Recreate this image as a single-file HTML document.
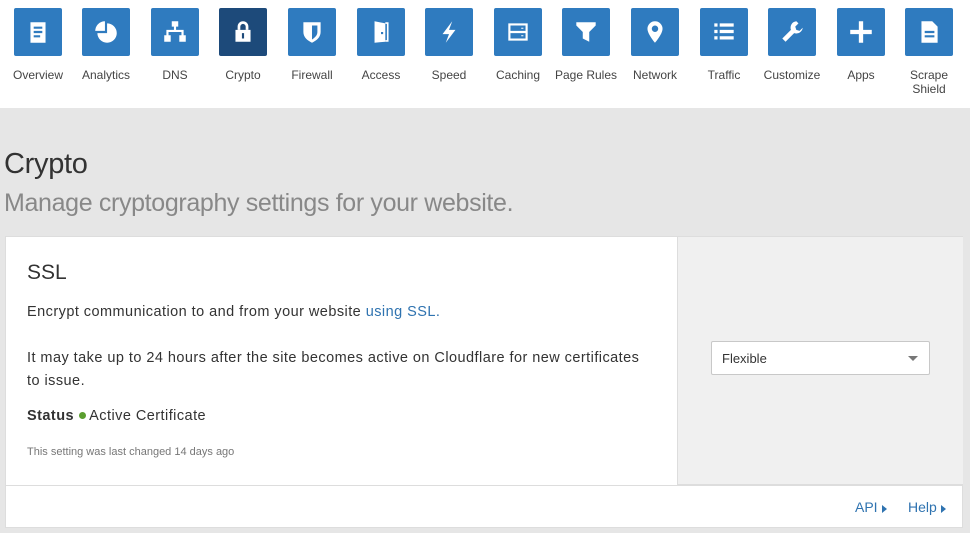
<!DOCTYPE html>
<html><head><style>
*{margin:0;padding:0;box-sizing:border-box}
body{width:970px;height:533px;background:#e6e6e6;font-family:"Liberation Sans",sans-serif;position:relative;overflow:hidden;color:#333}
#top{position:absolute;left:0;top:0;width:970px;height:108px;background:#fff}
.it{position:absolute;top:8px;width:68px;text-align:center;font-size:12px;color:#444;line-height:14px}
.ic{width:48px;height:48px;background:#2f7bbf;margin:0 auto 12px;border-radius:2px;display:flex;align-items:center;justify-content:center}
.ic.on{background:#1d4a7a}
.ic svg{width:28px;height:28px;fill:#fff}
h1{position:absolute;left:4px;top:148px;font-weight:normal;font-size:29px;color:#333;letter-spacing:-0.3px}
h2{position:absolute;left:4px;top:189px;font-weight:normal;font-size:25px;color:#888;letter-spacing:-0.35px}
#card{position:absolute;left:5px;top:236px;width:958px;height:292px;background:#fff;border:1px solid #ddd}
#right{position:absolute;left:671px;top:0;width:286px;height:248px;background:#f0f0f0;border-left:1px solid #ddd;border-bottom:1px solid #ddd}
#foot{position:absolute;left:0;top:248px;width:956px;height:1px;background:#ddd}
.t{position:absolute;left:21px;font-size:14.5px;color:#333;letter-spacing:0.45px;white-space:nowrap}
a{color:#2f73b0;text-decoration:none}
#sel{position:absolute;left:33px;top:104px;width:219px;height:34px;background:#fff;border:1px solid #c8c8c8;border-radius:2px;font-size:13px;padding:9px 10px;color:#333}
#sel:after{content:"";position:absolute;right:11px;top:14px;border:5px solid transparent;border-top:5px solid #777;border-bottom:0}
.lk{position:absolute;top:262px;font-size:14px;color:#2f73b0}
.tri{display:inline-block;border:4px solid transparent;border-left:5px solid #2f73b0;border-right:0;margin-left:4px;vertical-align:-1px}
</style></head><body>
<div id="top"></div>
<div class="it" style="left:4px"><div class="ic"><svg viewBox="0 0 26 26"><path d="M6 4h14v19H6z M9 8v2h8V8z M9 12v2h8v-2z M9 16v2h6v-2z" fill-rule="evenodd"/></svg></div>Overview</div>
<div class="it" style="left:72px"><div class="ic"><svg viewBox="0 0 26 26"><path d="M14 5a9 9 0 1 1-9 9h9z"/><path d="M12 3v9H3a9 9 0 0 1 9-9z"/></svg></div>Analytics</div>
<div class="it" style="left:141px"><div class="ic"><svg viewBox="0 0 26 26"><path d="M10 3h6v5h-2v3h7v5h2v6h-6v-6h2v-3h-12v3h2v6H3v-6h2v-5h7V8h-2z"/></svg></div>DNS</div>
<div class="it" style="left:209px"><div class="ic on"><svg viewBox="0 0 26 26"><path d="M8 11V8a5 5 0 0 1 10 0v3h-2.5V8a2.5 2.5 0 0 0-5 0v3z"/><path d="M6 11h14v11H6z M12 14v5h2v-5z" fill-rule="evenodd"/></svg></div>Crypto</div>
<div class="it" style="left:278px"><div class="ic"><svg viewBox="0 0 26 26"><path d="M5 4h16v9c0 5-4 8-8 10-4-2-8-5-8-10z M13 7v13c3-2 5-4 5-7V7z" fill-rule="evenodd"/></svg></div>Firewall</div>
<div class="it" style="left:347px"><div class="ic"><svg viewBox="0 0 26 26"><path d="M7 3l10 2v17l-10 1z M13 13h2v2h-2z" fill-rule="evenodd"/><path d="M17 4h3v18h-3v-1.5h1.5v-15H17z"/></svg></div>Access</div>
<div class="it" style="left:415px"><div class="ic"><svg viewBox="0 0 26 26"><path d="M16 3l-9 12h6l-3 8 9-12h-6z"/></svg></div>Speed</div>
<div class="it" style="left:484px"><div class="ic"><svg viewBox="0 0 26 26"><path d="M4 5h18v16H4z M6 7v5h14V7z M6 14v5h14v-5z M16 9h2v1h-2z M16 16h2v1h-2z" fill-rule="evenodd"/></svg></div>Caching</div>
<div class="it" style="left:550px;width:72px"><div class="ic"><svg viewBox="0 0 26 26"><path d="M4 4h18v3l-6 6v9l-6-3v-6L4 7z"/></svg></div>Page Rules</div>
<div class="it" style="left:621px"><div class="ic"><svg viewBox="0 0 26 26"><path d="M13 3a7 7 0 0 1 7 7c0 5-7 13-7 13S6 15 6 10a7 7 0 0 1 7-7z M13 7a3 3 0 1 0 0 6a3 3 0 0 0 0-6z" fill-rule="evenodd"/></svg></div>Network</div>
<div class="it" style="left:690px"><div class="ic"><svg viewBox="0 0 26 26"><path d="M4 5h3v3H4z M9 5h13v3H9z M4 11h3v3H4z M9 11h13v3H9z M4 17h3v3H4z M9 17h13v3H9z"/></svg></div>Traffic</div>
<div class="it" style="left:754px;width:76px"><div class="ic"><svg viewBox="0 0 26 26"><path d="M17 3a6 6 0 0 0-5 8l-8 8 3 3 8-8a6 6 0 0 0 8-5l-3 3-3-1-1-3 3-3z"/></svg></div>Customize</div>
<div class="it" style="left:827px"><div class="ic"><svg viewBox="0 0 26 26"><path d="M11 3h4v8h8v4h-8v8h-4v-8H3v-4h8z"/></svg></div>Apps</div>
<div class="it" style="left:895px"><div class="ic"><svg viewBox="0 0 26 26"><path d="M6 3h10l5 5v15H6z M9 12v2h9v-2z M9 16v2h9v-2z" fill-rule="evenodd"/></svg></div>Scrape<br>Shield</div>

<h1>Crypto</h1>
<h2>Manage cryptography settings for your website.</h2>
<div id="card">
<div class="t" style="top:24px;font-size:21px;letter-spacing:0">SSL</div>
<div class="t" style="top:67px">Encrypt communication to and from your website <a>using SSL.</a></div>
<div class="t" style="top:110px;line-height:23px">It may take up to 24 hours after the site becomes active on Cloudflare for new certificates<br>to issue.</div>
<div class="t" style="top:171px"><b>Status</b> <span style="display:inline-block;width:7px;height:7px;border-radius:50%;background:#5a9e2f;vertical-align:1px"></span> Active Certificate</div>
<div class="t" style="top:209px;font-size:11px;color:#777;letter-spacing:0">This setting was last changed 14 days ago</div>
<div id="right"><div id="sel">Flexible</div></div>
<div id="foot"></div>
<div class="lk" style="left:849px">API<span class="tri"></span></div>
<div class="lk" style="left:902px">Help<span class="tri"></span></div>
</div>
</body></html>
